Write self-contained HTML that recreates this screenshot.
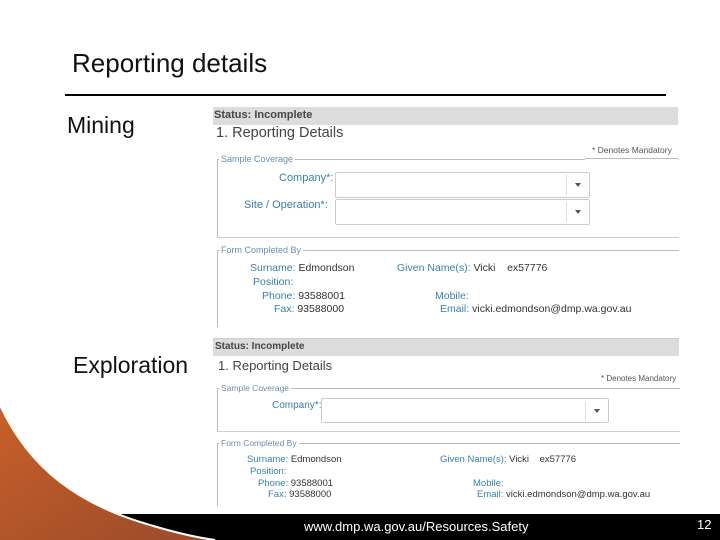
<!DOCTYPE html>
<html><head><style>
body{margin:0;width:720px;height:540px;position:relative;overflow:hidden;background:#fff;font-family:"Liberation Sans",sans-serif}
.a{position:absolute}
.t{font-family:"Liberation Sans",sans-serif;white-space:nowrap}
.lb{color:#3a7fa8}
.v{color:#333}
.fs{border:1px solid #bbb;border-right:none;position:absolute}
.lg{position:absolute;top:-7px;left:4px;background:#fff;font-size:9px;color:#6a8fb0;padding:0 2px;white-space:nowrap}
.sel{position:absolute;border:1px solid #ccc;border-radius:2px;background:#fff}
.sel::after{content:"";position:absolute;right:8px;top:10px;border-left:3px solid transparent;border-right:3px solid transparent;border-top:4px solid #555}
.sel::before{content:"";position:absolute;right:22px;top:2px;bottom:2px;border-left:1px solid #ddd}
</style></head><body>
<div class="a" style="left:72px;top:48px;font-size:26px;color:#111">Reporting details</div>
<div class="a" style="left:65px;top:94px;width:601px;height:2px;background:#000"></div>
<div class="a" style="left:67px;top:112px;font-size:23px;color:#111">Mining</div>
<div class="a" style="left:73px;top:352px;font-size:23px;color:#111">Exploration</div>

<!-- screenshot 1 -->
<div class="a" style="left:213px;top:107px;width:465px;height:18px;background:#dcdcdc"></div>
<div class="a t" style="left:214px;top:109px;font-size:11px;color:#444;font-weight:bold">Status: Incomplete</div>
<div class="a t" style="left:216px;top:125px;font-size:14.5px;color:#444">1. Reporting Details</div>
<div class="a t" style="left:592px;top:145px;font-size:8.5px;color:#555">* Denotes Mandatory</div>
<div class="fs" style="left:217px;top:159px;width:461px;height:77px;border-bottom-color:#ccc"><span class="lg" style="left:1px;top:-6px">Sample Coverage</span></div>
<div class="a" style="left:585px;top:159px;width:93px;height:1px;background:#fff"></div>
<div class="a" style="left:585px;top:158px;width:93px;height:1px;background:#bbb"></div>
<div class="a t lb" style="left:279px;top:172px;font-size:11px">Company*:</div>
<div class="sel" style="left:335px;top:172px;width:253px;height:24px"></div>
<div class="a t lb" style="left:244px;top:199px;font-size:11px">Site / Operation*:</div>
<div class="sel" style="left:335px;top:199px;width:253px;height:24px"></div>
<div class="fs" style="left:217px;top:250px;width:461px;height:76px;border-bottom:none"><span class="lg" style="left:1px;top:-6px">Form Completed By</span></div>
<div class="a t" style="font-size:10.5px;left:250px;top:262px"><span class="lb">Surname:</span> <span class="v">Edmondson</span></div>
<div class="a t" style="font-size:10.5px;left:397px;top:262px"><span class="lb">Given Name(s):</span> <span class="v">Vicki &nbsp;&nbsp; ex57776</span></div>
<div class="a t lb" style="font-size:10.5px;left:253px;top:276px">Position:</div>
<div class="a t" style="font-size:10.5px;left:262px;top:290px"><span class="lb">Phone:</span> <span class="v">93588001</span></div>
<div class="a t lb" style="font-size:10.5px;left:435px;top:290px">Mobile:</div>
<div class="a t" style="font-size:10.5px;left:274px;top:303px"><span class="lb">Fax:</span> <span class="v">93588000</span></div>
<div class="a t" style="font-size:10.5px;left:440px;top:303px"><span class="lb">Email:</span> <span class="v">vicki.edmondson@dmp.wa.gov.au</span></div>

<!-- screenshot 2 -->
<div class="a" style="left:213px;top:338px;width:466px;height:1px;background:#ccd"></div>
<div class="a" style="left:213px;top:339px;width:466px;height:17px;background:#dcdcdc"></div>
<div class="a t" style="left:215px;top:341px;font-size:10px;color:#444;font-weight:bold">Status: Incomplete</div>
<div class="a t" style="left:218px;top:358px;font-size:13px;color:#444">1. Reporting Details</div>
<div class="a t" style="left:601px;top:374px;font-size:8px;color:#555">* Denotes Mandatory</div>
<div class="fs" style="left:217px;top:388px;width:462px;height:42px;border-bottom-color:#ccc"><span class="lg" style="left:1px;top:-6px;font-size:8.5px">Sample Coverage</span></div>
<div class="a t lb" style="left:272px;top:400px;font-size:10px">Company*:</div>
<div class="sel" style="left:321px;top:398px;width:286px;height:23px"></div>
<div class="fs" style="left:217px;top:443px;width:462px;height:62px;border-bottom:none"><span class="lg" style="left:1px;top:-6px;font-size:8.5px">Form Completed By</span></div>
<div class="a t" style="font-size:9.5px;left:247px;top:454px"><span class="lb">Surname:</span> <span class="v">Edmondson</span></div>
<div class="a t" style="font-size:9.5px;left:440px;top:454px"><span class="lb">Given Name(s):</span> <span class="v">Vicki &nbsp;&nbsp; ex57776</span></div>
<div class="a t lb" style="font-size:9.5px;left:250px;top:466px">Position:</div>
<div class="a t" style="font-size:9.5px;left:258px;top:478px"><span class="lb">Phone:</span> <span class="v">93588001</span></div>
<div class="a t lb" style="font-size:9.5px;left:473px;top:478px">Mobile:</div>
<div class="a t" style="font-size:9.5px;left:268px;top:489px"><span class="lb">Fax:</span> <span class="v">93588000</span></div>
<div class="a t" style="font-size:9.5px;left:477px;top:489px"><span class="lb">Email:</span> <span class="v">vicki.edmondson@dmp.wa.gov.au</span></div>

<!-- footer -->
<div class="a" style="left:0;top:514px;width:720px;height:26px;background:#000"></div>
<svg class="a" style="left:0;top:0" width="720" height="540">
<defs><linearGradient id="g" x1="0" y1="0" x2="1" y2="1"><stop offset="0" stop-color="#c8602a"/><stop offset="1" stop-color="#9a4a2a"/></linearGradient></defs>
<path d="M0,405 C30,470 80,505 150,525 C180,534 200,538 215,540 L0,540 Z" fill="url(#g)"/>
<path d="M0,405 C30,470 80,505 150,525 C180,534 200,538 215,540" fill="none" stroke="#fff" stroke-width="2"/>
</svg>
<div class="a" style="left:304px;top:519px;font-size:13px;color:#fff">www.dmp.wa.gov.au/Resources.Safety</div>
<div class="a" style="left:697px;top:517px;font-size:13px;color:#fff">12</div>
</body></html>
